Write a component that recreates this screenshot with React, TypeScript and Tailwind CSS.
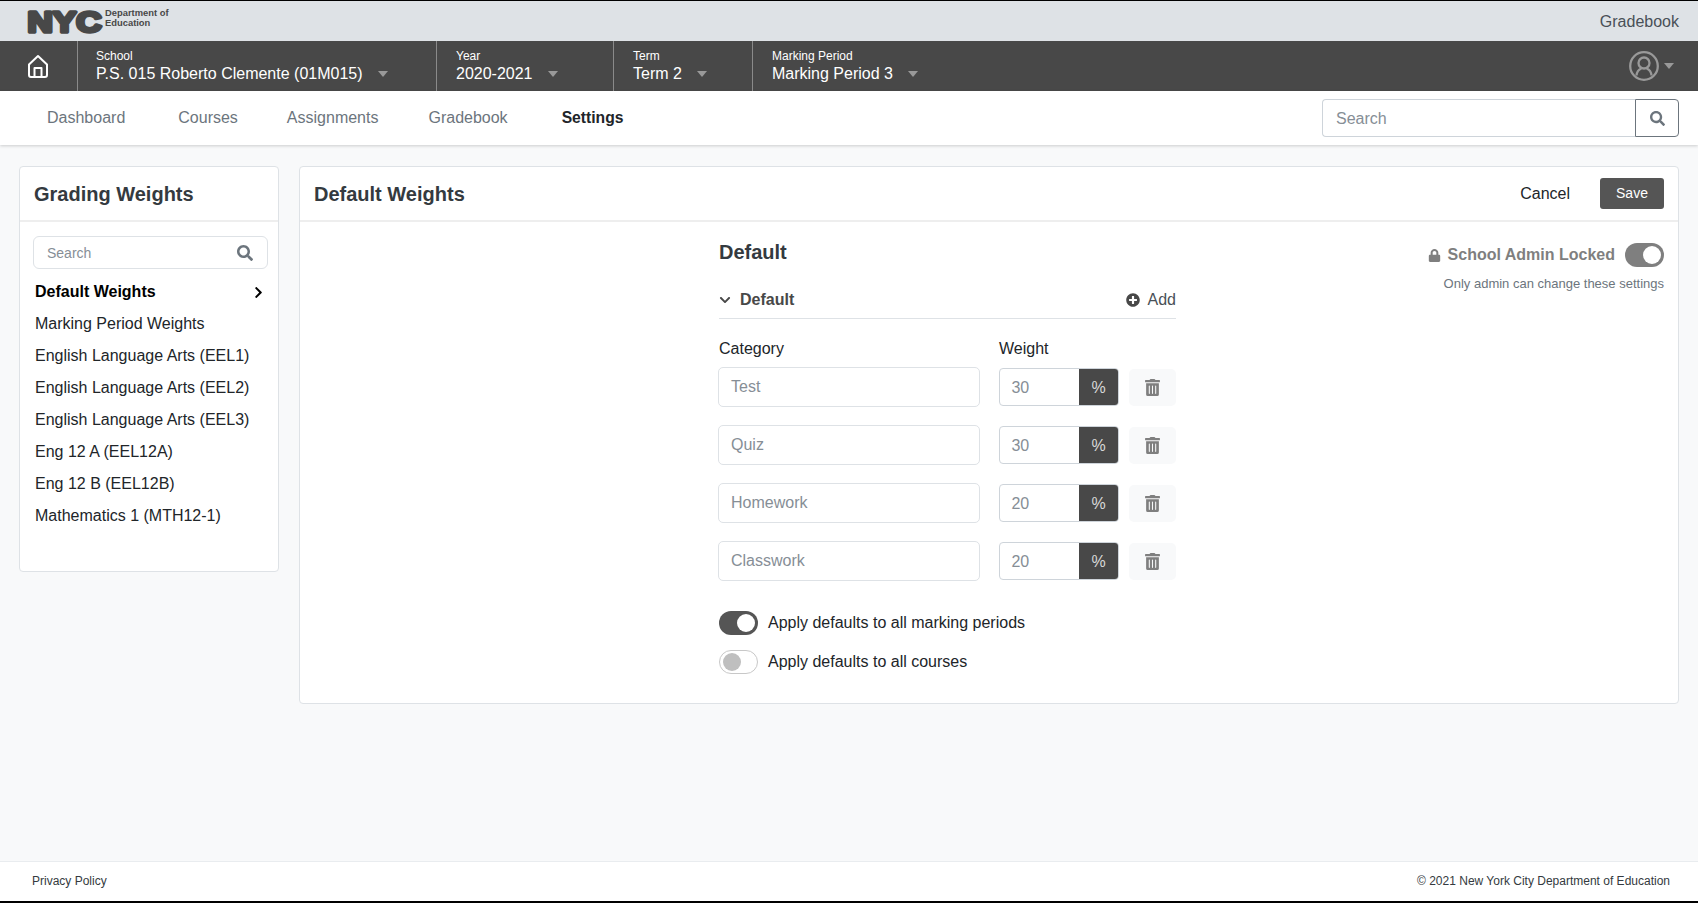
import React from "react";
import { FaChevronDown, FaChevronRight, FaLock, FaPlusCircle, FaSearch, FaTrashAlt } from "react-icons/fa";

function Caret({ className = "" }: { className?: string }) {
  return (
    <svg width="10" height="6" viewBox="0 0 10 6" className={className}>
      <path d="M0 0h10L5 6z" fill="#999999" />
    </svg>
  );
}

function Selector({ label, value, w, pl = "pl-[19px]" }: { label: string; value: string; w: string; pl?: string }) {
  return (
    <div className={`flex h-full flex-col justify-center border-l border-[#8a8a8a] text-white ${pl} ${w}`}>
      <div className="mt-[1px] text-[12px] leading-[14px]">{label}</div>
      <div className="mt-[1px] flex items-center text-[16px] leading-[20px]">
        <span>{value}</span>
        <Caret className="ml-[15px]" />
      </div>
    </div>
  );
}

function Row({ name, value }: { name: string; value: string }) {
  return (
    <div className="flex h-[40px] items-center">
      <div className="flex h-[40px] w-[263px] items-center rounded-[5px] border border-[#dee2e6] bg-white pl-[12px] text-[16px] text-[#868e96]">
        {name}
      </div>
      <div className="ml-[19px] flex h-[38px] w-[120px] overflow-hidden rounded-[4px] border border-[#ced4da]">
        <div className="flex flex-1 items-center pl-[11px] pt-[1px] text-[16px] text-[#868e96]">{value}</div>
        <div className="flex w-[39px] items-center justify-center bg-[#484848] pt-[1px] text-[16px] text-[#d8d8d8]">%</div>
      </div>
      <div className="ml-[10px] flex h-[37px] w-[47px] items-center justify-center rounded-[5px] bg-[#f8f9fa]">
        <FaTrashAlt size={17} color="#7f7f7f" />
      </div>
    </div>
  );
}

function Toggle({ on, color = "#555555" }: { on: boolean; color?: string }) {
  if (on) {
    return (
      <div className="flex h-[24px] w-[39px] items-center justify-end rounded-full pr-[3px]" style={{ backgroundColor: color }}>
        <div className="h-[18px] w-[18px] rounded-full bg-white" />
      </div>
    );
  }
  return (
    <div className="flex h-[24px] w-[39px] items-center rounded-full border border-[#c8c8c8] bg-white pl-[3px]">
      <div className="h-[18px] w-[18px] rounded-full bg-[#bfbfbf]" />
    </div>
  );
}

const courses = [
  "Marking Period Weights",
  "English Language Arts (EEL1)",
  "English Language Arts (EEL2)",
  "English Language Arts (EEL3)",
  "Eng 12 A (EEL12A)",
  "Eng 12 B (EEL12B)",
  "Mathematics 1 (MTH12-1)",
];

export default function App() {
  return (
    <div className="flex h-[903px] w-[1698px] flex-col overflow-hidden border-t border-b-2 border-t-black border-b-black bg-[#f8f9fa] font-['Liberation_Sans',Arial,sans-serif] text-[16px] text-[#212529]">
      {/* top strip */}
      <div className="flex h-[40px] shrink-0 items-center justify-between bg-[#dee2e6] pl-[27px] pr-[19px]">
        <div className="flex items-start self-start">
          <svg width="76" height="26" viewBox="0 0 76 26" overflow="visible" className="mt-[7px]">
            <text
              x="0.500"
              y="23.500"
              textLength="74"
              lengthAdjust="spacingAndGlyphs"
              fontFamily="'Liberation Sans', Arial, sans-serif"
              fontWeight="700"
              fontSize="29"
              fill="#484848"
              stroke="#484848"
              strokeWidth="3.500"
              strokeLinejoin="round"
            >
              NYC
            </text>
          </svg>
          <div className="ml-[2px] mt-[7px] text-[9.4px] font-bold leading-[10px] text-[#484848]">
            <div>Department of</div>
            <div>Education</div>
          </div>
        </div>
        <div className="pt-[2px] text-[16px] text-[#495057]">Gradebook</div>
      </div>

      {/* context bar */}
      <div className="flex h-[50px] shrink-0 items-center bg-[#484848]">
        <div className="flex h-full w-[77px] items-center justify-center">
          <svg width="24" height="25" viewBox="0 0 24 25" fill="none" stroke="white" strokeWidth="2" strokeLinejoin="round" className="mr-[1px] mt-[1px]">
            <path d="M12 2 3 10.500V21a2 2 0 0 0 2 2h14a2 2 0 0 0 2-2V10.500z" />
            <path d="M8.500 23v-9h7v9" />
          </svg>
        </div>
        <Selector label="School" value="P.S. 015 Roberto Clemente (01M015)" w="w-[359px]" pl="pl-[18px]" />
        <Selector label="Year" value="2020-2021" w="w-[177px]" />
        <Selector label="Term" value="Term 2" w="w-[139px]" />
        <Selector label="Marking Period" value="Marking Period 3" w="w-[300px]" />
        <div className="ml-auto flex items-center pr-[24px]">
          <svg width="30" height="30" viewBox="0 0 30 30" fill="none" stroke="#999999" strokeWidth="2.300">
            <circle cx="15" cy="15" r="13.800" />
            <circle cx="15" cy="12" r="5.500" />
            <path d="M7.500 24.500c.3-3.500 2.500-6 4.800-7M22.500 24.500c-.3-3.500-2.500-6-4.800-7" />
          </svg>
          <Caret className="ml-[5px]" />
        </div>
      </div>

      {/* nav */}
      <div className="z-10 flex h-[54px] shrink-0 items-center bg-white pr-[19px] shadow-[0_1px_3px_rgba(0,0,0,0.18)]">
        <div className="ml-[47px] text-[#6c757d]">Dashboard</div>
        <div className="ml-[53px] text-[#6c757d]">Courses</div>
        <div className="ml-[49px] text-[#6c757d]">Assignments</div>
        <div className="ml-[50px] text-[#6c757d]">Gradebook</div>
        <div className="ml-[54px] text-[15.7px] font-bold text-[#212529]">Settings</div>
        <div className="ml-auto flex h-[38px] w-[357px]">
          <div className="flex flex-1 items-center rounded-l-[4px] border border-r-0 border-[#ced4da] pl-[13px] pt-[1px] text-[#868e96]">Search</div>
          <div className="flex w-[44px] items-center justify-center rounded-r-[4px] border border-[#6c757d]">
            <FaSearch size={15} color="#6c757d" />
          </div>
        </div>
      </div>

      {/* body */}
      <div className="flex flex-1 items-start gap-[20px] pl-[19px] pr-[19px] pt-[21px]">
        <aside className="flex h-[406px] w-[260px] shrink-0 flex-col rounded-[4px] border border-[#dee2e6] bg-white">
          <div className="flex h-[55px] shrink-0 items-center border-b-2 border-[#eeeeee] pl-[14px] text-[20px] font-bold text-[#343a40]">Grading Weights</div>
          <div className="px-[13px] pt-[14px]">
            <div className="flex h-[33px] w-[235px] items-center justify-between rounded-[6px] border border-[#dee2e6] pl-[13px] pr-[14px] text-[14px] text-[#868e96]">
              <span className="pt-[1px]">Search</span>
              <FaSearch size={16} color="#6c757d" />
            </div>
          </div>
          <div className="pl-[15px] pr-[13px] pt-[7px]">
            <div className="flex h-[32px] items-center justify-between font-bold text-black">
              <span>Default Weights</span>
              <FaChevronRight size={13} color="#000" />
            </div>
            {courses.map((c) => (
              <div key={c} className="flex h-[32px] items-center text-[#212529]">{c}</div>
            ))}
          </div>
        </aside>

        <main className="flex h-[538px] flex-1 flex-col rounded-[4px] border border-[#dee2e6] bg-white">
          <div className="flex h-[55px] shrink-0 items-center border-b-2 border-[#eeeeee] pl-[14px] pr-[14px]">
            <div className="text-[20px] font-bold text-[#343a40]">Default Weights</div>
            <div className="ml-auto text-[#212529]">Cancel</div>
            <div className="ml-[30px] flex h-[31px] w-[64px] items-center justify-center rounded-[3px] bg-[#555555] text-[14px] text-white">Save</div>
          </div>
          <div className="flex flex-1">
            <div className="ml-[418px] w-[458px] shrink-0">
              <div className="pl-[1px] pt-[18px] text-[20px] font-bold leading-[24px] text-[#343a40]">Default</div>
              <div className="ml-[1px] mt-[24px] flex h-[31px] items-start justify-between border-b border-[#dee2e6]">
                <div className="flex items-center font-bold text-[#484848]">
                  <FaChevronDown size={12} color="#484848" className="mr-[9px]" />
                  Default
                </div>
                <div className="flex items-center text-[#495057]">
                  <FaPlusCircle size={14} color="#484848" className="mr-[8px]" />
                  Add
                </div>
              </div>
              <div className="ml-[1px] mt-[21px] flex h-[18px] items-center leading-[18px] text-[#212529]">
                <div className="w-[280px]">Category</div>
                <div>Weight</div>
              </div>
              <div className="mt-[9px] flex flex-col gap-[18px]">
                <Row name="Test" value="30" />
                <Row name="Quiz" value="30" />
                <Row name="Homework" value="20" />
                <Row name="Classwork" value="20" />
              </div>
              <div className="ml-[1px] mt-[30px] flex h-[24px] items-center gap-[10px]">
                <Toggle on />
                <span>Apply defaults to all marking periods</span>
              </div>
              <div className="ml-[1px] mt-[15px] flex h-[24px] items-center gap-[10px]">
                <Toggle on={false} />
                <span>Apply defaults to all courses</span>
              </div>
            </div>
            <div className="flex flex-1 flex-col items-end pr-[14px] pt-[21px]">
              <div className="flex items-center">
                <FaLock size={13} color="#7f7f7f" />
                <span className="ml-[7px] font-bold text-[#7f7f7f]">School Admin Locked</span>
                <div className="ml-[10px]">
                  <Toggle on color="#7f7f7f" />
                </div>
              </div>
              <div className="mt-[7px] text-[13px] text-[#6c757d]">Only admin can change these settings</div>
            </div>
          </div>
        </main>
      </div>

      {/* footer */}
      <div className="flex h-[40px] shrink-0 items-center justify-between border-t border-[#e9ecef] bg-white pb-[2px] pl-[32px] pr-[28px] text-[12px] text-[#343a40]">
        <span>Privacy Policy</span>
        <span>© 2021 New York City Department of Education</span>
      </div>
    </div>
  );
}
